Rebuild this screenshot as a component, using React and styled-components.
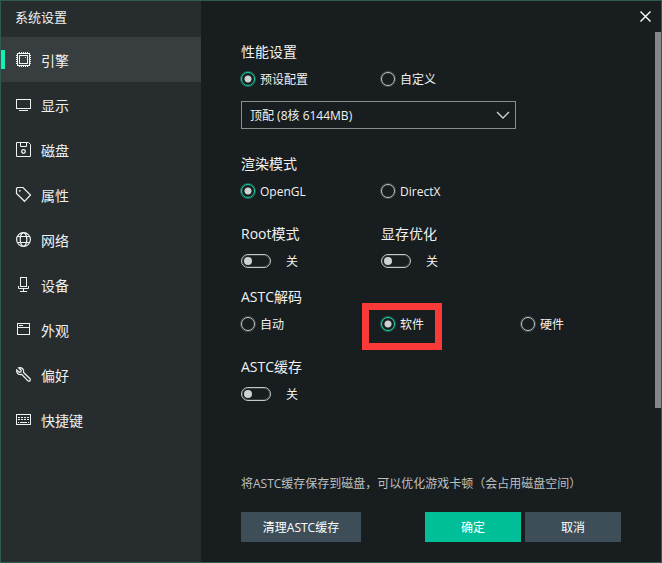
import React from 'react';
import { useState } from 'react';
import styled, { createGlobalStyle } from 'styled-components';

const ICONS = {
  engine: (
    <>
      <rect x="1.5" y="1.5" width="12" height="12" />
      <rect x="3.5" y="3.5" width="8" height="8" />
      <path d="M3.5 0v1M5.5 0v1M7.5 0v1M9.5 0v1M11.5 0v1M3.5 14v1M5.5 14v1M7.5 14v1M9.5 14v1M11.5 14v1M0 3.5h1M0 5.5h1M0 7.5h1M0 9.5h1M0 11.5h1M14 3.5h1M14 5.5h1M14 7.5h1M14 9.5h1M14 11.5h1" />
      <path d="M9 5.5h1" strokeWidth="0.8" />
    </>
  ),
  display: (
    <>
      <rect x="0.5" y="2.5" width="14" height="9" />
      <path d="M3 13.5h9" />
    </>
  ),
  disk: (
    <>
      <path d="M0.5 0.5h12l2 2v12h-14z" />
      <path d="M4.5 0.5v4h6v-4" />
      <circle cx="7.5" cy="9.5" r="1.8" strokeWidth="1.3" />
    </>
  ),
  tag: (
    <>
      <path
        d="M0.5 1.5l1-1h5.5l7.5 7.5-6 6.3L0.5 6.5z"
        strokeWidth="1.2"
      />
      <circle cx="3.8" cy="3.8" r="0.9" fill="currentColor" stroke="none" />
    </>
  ),
  network: (
    <g strokeWidth="1.2">
      <circle cx="7.5" cy="7.5" r="6.9" />
      <ellipse cx="7.5" cy="7.5" rx="3.3" ry="6.9" />
      <path d="M1.2 4.5h12.6M1.2 10.5h12.6" />
    </g>
  ),
  device: (
    <>
      <rect x="4.5" y="0.5" width="6" height="9" />
      <path d="M2.5 9v2.5h10V9M7.5 11.5v3M4 14.5h7" />
    </>
  ),
  look: (
    <>
      <rect x="1.5" y="1.5" width="12" height="11" />
      <path d="M1.5 5.5h12M3 3.5h4" />
    </>
  ),
  wrench: (
    <path
      d="M2.6 0.8l2.6 2.5-0.4 1.6-1.6 0.4L0.7 2.9C0.2 5.2 1.8 7.5 4.1 7.6c0.6 0 1.1-0.1 1.5-0.3l6.3 6.5c1.5 1.2 3.3-0.6 2.1-2.1L7.6 5.5c0.9-2.8-1.8-5.7-5-4.7z"
      strokeWidth="1.2"
    />
  ),
  keyboard: (
    <>
      <rect x="0.5" y="2.5" width="14" height="10" />
      <path d="M2 5.5h11M2 7.5h11" strokeDasharray="2 1" />
      <path d="M2 10.5h1M4 10.5h7M12 10.5h1" />
    </>
  ),
};

const MENU = [
  { icon: 'engine', label: '引擎' },
  { icon: 'display', label: '显示' },
  { icon: 'disk', label: '磁盘' },
  { icon: 'tag', label: '属性' },
  { icon: 'network', label: '网络' },
  { icon: 'device', label: '设备' },
  { icon: 'look', label: '外观' },
  { icon: 'wrench', label: '偏好' },
  { icon: 'keyboard', label: '快捷键' },
];

const RadioGroup = ({ title, name, options, initial, marked }) => {
  const [value, setValue] = useState(initial);

  return (
    <Group>
      <GroupTitle>{title}</GroupTitle>
      <Columns>
        {options.map((option) => (
          <RadioLabel key={option}>
            <Radio
              name={name}
              checked={value === option}
              onChange={() => setValue(option)}
            />
            <ControlText>{option}</ControlText>
            {marked === option && <Marker />}
          </RadioLabel>
        ))}
      </Columns>
    </Group>
  );
};

const SwitchGroup = ({ title }) => {
  const [on, setOn] = useState(false);

  return (
    <Group>
      <GroupTitle>{title}</GroupTitle>
      <SwitchLabel>
        <Switch
          aria-label={title}
          checked={on}
          onChange={() => setOn(!on)}
        />
        <ControlText>{on ? '开' : '关'}</ControlText>
      </SwitchLabel>
    </Group>
  );
};

const App = () => {
  const [active, setActive] = useState('engine');

  return (
    <Window>
      <GlobalStyle />
      <Sidebar>
        <WindowTitle>系统设置</WindowTitle>
        <nav>
          {MENU.map(({ icon, label }) => (
            <MenuItem
              key={icon}
              $active={active === icon}
              onClick={() => setActive(icon)}
            >
              <MenuIcon viewBox="0 0 15 15">{ICONS[icon]}</MenuIcon>
              <ControlText>{label}</ControlText>
            </MenuItem>
          ))}
        </nav>
      </Sidebar>

      <Main>
        <TopBar>
          <CloseButton aria-label="关闭">
            <svg width="11" height="11" viewBox="0 0 11 11">
              <path d="M0.5 0.5l10 10M10.5 0.5l-10 10" />
            </svg>
          </CloseButton>
        </TopBar>

        <Settings>
          <PresetSection>
            <RadioGroup
              title="性能设置"
              name="performance"
              options={['预设配置', '自定义']}
              initial="预设配置"
            />
            <SelectBox>
              <Select aria-label="预设配置">
                <option>顶配 (8核 6144MB)</option>
              </Select>
              <Chevron viewBox="0 0 14 8">
                <path d="M1 1l6 6 6-6" />
              </Chevron>
            </SelectBox>
          </PresetSection>
          <Section>
            <RadioGroup
              title="渲染模式"
              name="render"
              options={['OpenGL', 'DirectX']}
              initial="OpenGL"
            />
          </Section>
          <Section $tight>
            <Columns>
              <SwitchGroup title="Root模式" />
              <SwitchGroup title="显存优化" />
            </Columns>
          </Section>
          <Section>
            <RadioGroup
              title="ASTC解码"
              name="astc"
              options={['自动', '软件', '硬件']}
              initial="软件"
              marked="软件"
            />
          </Section>
          <Section>
            <SwitchGroup title="ASTC缓存" />
          </Section>
          <ScrollThumb />
        </Settings>

        <Footer>
          <Note>将ASTC缓存保存到磁盘，可以优化游戏卡顿（会占用磁盘空间）</Note>
          <Actions>
            <WideButton>清理ASTC缓存</WideButton>
            <ActionPair>
              <Button $primary>确定</Button>
              <Button>取消</Button>
            </ActionPair>
          </Actions>
        </Footer>
      </Main>
    </Window>
  );
};

const GlobalStyle = createGlobalStyle`
  * {
    box-sizing: border-box;
  }

  body {
    margin: 0;
    background-color: #181d1f;
  }

  body, button, select, input {
    font-family: 'Open Sans', 'Noto Sans CJK SC', sans-serif;
  }
`;

const Window = styled.div`
  display: flex;
  min-height: 100vh;
  border: 1px solid #2f5a50;
  background-color: #181d1f;
  color: #f0f2f2;
  font-size: 12px;
  line-height: 20px;
`;

const Sidebar = styled.aside`
  flex: 0 0 200px;
  background-color: #272d2f;
`;

const WindowTitle = styled.h1`
  margin: 0;
  padding: 6px 14px 10px;
  font-size: 13px;
  font-weight: 400;
  line-height: 20px;
`;

const MenuItem = styled.button`
  position: relative;
  display: flex;
  align-items: center;
  gap: 10px;
  width: 100%;
  height: 45px;
  padding: 0 15px;
  border: 0;
  background-color: ${({ $active }) => ($active ? '#383d3f' : 'transparent')};
  color: #f0f2f2;
  font-size: 14px;
  line-height: 20px;
  cursor: pointer;

  &::before {
    content: '';
    display: ${({ $active }) => ($active ? 'block' : 'none')};
    position: absolute;
    left: 0;
    top: 13px;
    width: 4px;
    height: 19px;
    background-color: #14efb6;
  }
`;

const MenuIcon = styled.svg`
  width: 15px;
  height: 15px;
  fill: none;
  stroke: currentColor;
  overflow: visible;
`;

const ControlText = styled.span`
  padding-top: 2px;
`;

const Main = styled.main`
  display: flex;
  flex: 1;
  flex-direction: column;
  min-width: 0;
`;

const TopBar = styled.div`
  display: flex;
  justify-content: flex-end;
  height: 31px;
`;

const CloseButton = styled.button`
  display: flex;
  align-items: center;
  justify-content: center;
  width: 31px;
  height: 31px;
  padding: 0;
  border: 0;
  background: none;
  cursor: pointer;

  svg {
    fill: none;
    stroke: #ffffff;
    stroke-width: 1.4;
  }
`;

const Settings = styled.div`
  position: relative;
  flex: 1;
  padding: 10px 40px;
`;

const Section = styled.section`
  margin-bottom: ${({ $tight }) => ($tight ? '16px' : '23px')};
`;

const PresetSection = styled.section`
  margin-bottom: 25px;
`;

const Group = styled.div`
  display: flex;
  flex-direction: column;
  gap: 7px;
`;

const GroupTitle = styled.h2`
  margin: 0;
  font-size: 14px;
  font-weight: 400;
  line-height: 20px;
`;

const Columns = styled.div`
  display: grid;
  grid-template-columns: repeat(3, 140px);
`;

const RadioLabel = styled.label`
  position: relative;
  display: flex;
  align-items: center;
  gap: 5px;
  height: 20px;
`;

const Radio = styled.input.attrs({ type: 'radio' })`
  appearance: none;
  width: 14px;
  height: 14px;
  margin: 0;
  border: 1px solid #c4c8c9;
  border-radius: 50%;
  box-shadow: 0 0 0 1px rgba(196, 200, 201, 0.25);

  &:checked {
    border-color: #1cdcae;
    background: radial-gradient(circle, #cfd2d2 3px, transparent 4px);
    box-shadow: 0 0 0 1px rgba(28, 220, 174, 0.35);
  }
`;

const Marker = styled.span`
  position: absolute;
  left: -19px;
  top: -11px;
  width: 80px;
  height: 47px;
  border: 7px solid #f93a37;
  pointer-events: none;
`;

const SwitchLabel = styled.label`
  display: flex;
  align-items: center;
  gap: 15px;
  height: 20px;
`;

const Switch = styled.input.attrs({ type: 'checkbox', role: 'switch' })`
  appearance: none;
  display: flex;
  align-items: center;
  width: 30px;
  height: 14px;
  margin: 0;
  padding: 0 2px;
  border: 1px solid #c4c8c9;
  border-radius: 7px;
  box-shadow: inset 0 0 0 1px rgba(196, 200, 201, 0.2);

  &::before {
    content: '';
    width: 8px;
    height: 8px;
    border-radius: 50%;
    background-color: #cfd2d2;
  }

  &:checked {
    justify-content: flex-end;
    border-color: #1cdcae;
  }
`;

const SelectBox = styled.div`
  position: relative;
  width: 275px;
  margin-top: 12px;
`;

const Select = styled.select`
  appearance: none;
  display: block;
  width: 100%;
  height: 28px;
  padding: 0 32px 0 8px;
  border: 1px solid #8a8e8f;
  border-radius: 0;
  background-color: transparent;
  color: #f0f2f2;
  font-size: 12px;
`;

const Chevron = styled.svg`
  position: absolute;
  right: 6px;
  top: 10px;
  width: 14px;
  height: 8px;
  fill: none;
  stroke: #d5d8d8;
  stroke-width: 1.3;
  pointer-events: none;
`;

const ScrollThumb = styled.div`
  position: absolute;
  right: 0;
  top: 0;
  width: 6px;
  height: 85%;
  background-color: #858888;
`;

const Footer = styled.footer`
  padding: 0 40px 20px;
`;

const Note = styled.p`
  margin: 0 0 18px;
  color: #bcc0c1;
`;

const Actions = styled.div`
  display: flex;
  justify-content: space-between;
`;

const ActionPair = styled.div`
  display: flex;
  gap: 4px;
`;

const Button = styled.button`
  width: 96px;
  height: 30px;
  padding: 0;
  border: 0;
  background-color: ${({ $primary }) => ($primary ? '#00bf98' : '#3e4e58')};
  color: #ffffff;
  font-size: 12px;
  cursor: pointer;
`;

const WideButton = styled(Button)`
  width: 120px;
`;

export default App;
